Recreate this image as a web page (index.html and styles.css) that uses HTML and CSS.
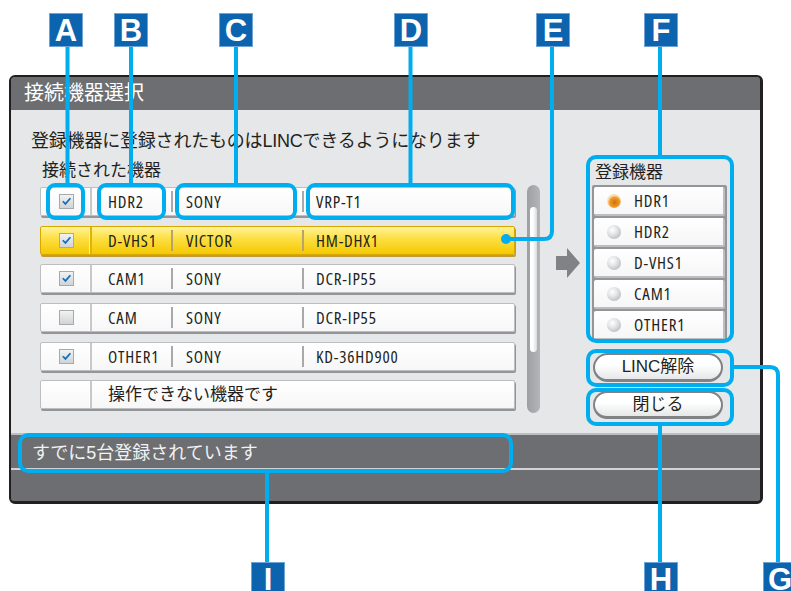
FILE: index.html
```html
<!DOCTYPE html>
<html>
<head>
    <title>接続機器選択</title>
    <link rel="stylesheet" href="styles.css">
</head>
<body>

<div class="page">
    <div class="dialog">
        <div class="titlebar">接続機器選択</div>

        <div class="content">
            <p class="intro">登録機器に登録されたものはLINCできるようになります</p>

            <div class="main">
                <div class="devices">
                    <div class="list-label">接続された機器</div>
                    <div class="rows">
                        <div class="row">
                            <div class="chk-cell"><span class="chk"><svg viewBox="0 0 15 15"><path d="M3.2 7.2 L6.3 10.3 L12 3.8"/></svg></span></div>
                            <div class="cell name">HDR2</div>
                            <div class="cell maker">SONY</div>
                            <div class="cell model">VRP-T1</div>
                        </div>
                        <div class="row selected">
                            <div class="chk-cell"><span class="chk"><svg viewBox="0 0 15 15"><path d="M3.2 7.2 L6.3 10.3 L12 3.8"/></svg></span></div>
                            <div class="cell name">D-VHS1</div>
                            <div class="cell maker">VICTOR</div>
                            <div class="cell model">HM-DHX1</div>
                        </div>
                        <div class="row">
                            <div class="chk-cell"><span class="chk"><svg viewBox="0 0 15 15"><path d="M3.2 7.2 L6.3 10.3 L12 3.8"/></svg></span></div>
                            <div class="cell name">CAM1</div>
                            <div class="cell maker">SONY</div>
                            <div class="cell model">DCR-IP55</div>
                        </div>
                        <div class="row">
                            <div class="chk-cell"><span class="chk"></span></div>
                            <div class="cell name">CAM</div>
                            <div class="cell maker">SONY</div>
                            <div class="cell model">DCR-IP55</div>
                        </div>
                        <div class="row">
                            <div class="chk-cell"><span class="chk"><svg viewBox="0 0 15 15"><path d="M3.2 7.2 L6.3 10.3 L12 3.8"/></svg></span></div>
                            <div class="cell name">OTHER1</div>
                            <div class="cell maker">SONY</div>
                            <div class="cell model">KD-36HD900</div>
                        </div>
                        <div class="row disabled">
                            <div class="chk-cell"></div>
                            <div class="cell note">操作できない機器です</div>
                        </div>
                    </div>
                </div>

                <div class="scrollbar"><div class="thumb"></div></div>

                <div class="arrow">
                    <svg viewBox="0 0 24 30"><polygon points="0,8 11,8 11,0 24,15 11,30 11,22 0,22"/></svg>
                </div>

                <div class="registered">
                    <div class="reg-title">登録機器</div>
                    <div class="reg-list">
                        <div class="reg-item"><span class="radio on"></span>HDR1</div>
                        <div class="reg-item"><span class="radio"></span>HDR2</div>
                        <div class="reg-item"><span class="radio"></span>D-VHS1</div>
                        <div class="reg-item"><span class="radio"></span>CAM1</div>
                        <div class="reg-item"><span class="radio"></span>OTHER1</div>
                    </div>
                    <div class="btn btn-linc">LINC解除</div>
                    <div class="btn btn-close">閉じる</div>
                </div>
            </div>
        </div>

        <div class="status">すでに5台登録されています</div>
        <div class="footer"></div>
    </div>

    <!-- callout lines and frames -->
    <svg class="callouts" viewBox="0 0 791 591">
        <line x1="67.5" y1="46" x2="67.5" y2="185"/>
        <line x1="131" y1="46" x2="131" y2="185"/>
        <line x1="236" y1="46" x2="236" y2="185"/>
        <line x1="410.5" y1="46" x2="410.5" y2="185"/>
        <line x1="660" y1="46" x2="660" y2="157"/>
        <path d="M552 46 V231 Q552 239 544 239 H506"/>
        <circle cx="506" cy="239" r="5" class="dot"/>
        <path d="M732 367 H770 Q778 367 778 375 V562"/>
        <line x1="660" y1="424" x2="660" y2="562"/>
        <line x1="267" y1="471" x2="267" y2="562"/>

        <rect x="48" y="185" width="35" height="33" rx="7"/>
        <rect x="99" y="185" width="65" height="33" rx="7"/>
        <rect x="177" y="185" width="118" height="33" rx="7"/>
        <rect x="308" y="185" width="205" height="33" rx="7"/>
        <rect x="588" y="157" width="144" height="184" rx="8"/>
        <rect x="588" y="351" width="144" height="34" rx="8"/>
        <rect x="588" y="390" width="144" height="34" rx="8"/>
        <rect x="20" y="435" width="491" height="36" rx="8"/>
    </svg>

    <div class="tag tag-a">A</div>
    <div class="tag tag-b">B</div>
    <div class="tag tag-c">C</div>
    <div class="tag tag-d">D</div>
    <div class="tag tag-e">E</div>
    <div class="tag tag-f">F</div>
    <div class="tag tag-i">I</div>
    <div class="tag tag-h">H</div>
    <div class="tag tag-g">G</div>
</div>

</body>
</html>
```

FILE: styles.css
```css
body {
    margin: 0;
    background-color: #ffffff;
    font-family: "Liberation Sans", "Noto Sans CJK JP", sans-serif;
    color: #231f20;
}
.page {
    position: relative;
    width: 791px;
    height: 591px;
    overflow: hidden;
}
.dialog {
    box-sizing: border-box;
    width: 754px;
    height: 429px;
    margin: 75px 0 0 9px;
    border: 2px solid #231f20;
    border-right-width: 3px;
    border-bottom-width: 3px;
    border-radius: 6px;
    overflow: hidden;
    background-color: #6d6e71;
}
.titlebar {
    height: 33px;
    line-height: 33px;
    padding-left: 13px;
    font-size: 20px;
    color: #ffffff;
    background-color: #6d6e71;
}
.content {
    height: 323px;
    background-color: #e6e7e8;
    overflow: hidden;
}
.intro {
    margin: 0;
    padding: 20px 0 0 20px;
    font-size: 18px;
    line-height: 22px;
    letter-spacing: -0.2px;
}
.main {
    display: flex;
    align-items: flex-start;
    margin: 8px 0 0 29px;
}
.devices {
    width: 475px;
}
.list-label {
    padding-left: 2px;
    font-size: 17px;
    line-height: 22px;
}
.rows {
    display: flex;
    flex-direction: column;
    gap: 9.7px;
    margin-top: 5px;
}
.row {
    box-sizing: border-box;
    height: 29px;
    display: grid;
    grid-template-columns: 51px 79px 131px 1fr;
    align-items: center;
    background: linear-gradient(#ffffff, #f7f7f7);
    border: 1px solid #bcbec0;
    border-radius: 2px;
    box-shadow: 1px 2px 0 #939598;
}
.row.selected {
    background: linear-gradient(#fff39a, #fde047 40%, #f5c800);
    border-color: #d7a900;
    box-shadow: 1px 2px 0 #c39b3c;
}
.row.disabled {
    grid-template-columns: 51px 1fr;
}
.chk-cell {
    height: 100%;
    display: flex;
    align-items: center;
    justify-content: center;
    border-right: 2px solid #c7c8ca;
    box-shadow: inset -1px 0 0 #ffffff;
}
.row.selected .chk-cell {
    border-right-color: #e2b400;
    box-shadow: inset -1px 0 0 #fff3a0;
}
.chk {
    box-sizing: border-box;
    width: 15px;
    height: 15px;
    margin-left: 2px;
    border: 1px solid #a7a9ac;
    background: linear-gradient(#f1f2f2, #d1d3d4);
}
.chk svg {
    display: block;
    width: 13px;
    height: 13px;
}
.chk path {
    fill: none;
    stroke: #0f6fc0;
    stroke-width: 2;
}
.cell {
    font-family: "Open Sans", "DejaVu Sans Condensed", sans-serif;
    font-stretch: 75%;
    font-size: 17px;
    letter-spacing: 0.8px;
    line-height: 21px;
    white-space: nowrap;
}
.name {
    padding-left: 16px;
}
.maker {
    padding-left: 13px;
    border-left: 2px solid #a7a9ac;
}
.model {
    padding-left: 12px;
    border-left: 2px solid #a7a9ac;
}
.row.selected .maker,
.row.selected .model {
    border-left-color: #b8a46a;
}
.note {
    padding-left: 16px;
    font-family: "Liberation Sans", "Noto Sans CJK JP", sans-serif;
    font-stretch: normal;
    font-size: 17px;
    letter-spacing: 0;
}
.scrollbar {
    width: 13px;
    height: 228px;
    margin: 25px 0 0 12px;
    border-radius: 7px;
    background: linear-gradient(90deg, #9d9fa2, #b3b5b8);
    padding-top: 22px;
    box-sizing: border-box;
}
.thumb {
    width: 7px;
    height: 145px;
    margin-left: 3px;
    border-radius: 4px;
    background: linear-gradient(90deg, #ffffff 40%, #d9dadb);
}
.arrow {
    width: 24px;
    height: 30px;
    margin: 88px 0 0 16px;
}
.arrow svg {
    display: block;
    width: 24px;
    height: 30px;
    fill: #808285;
}
.registered {
    width: 135px;
    margin-left: 12px;
}
.reg-title {
    margin-top: 3px;
    padding-left: 3px;
    font-size: 17px;
    line-height: 20px;
}
.reg-list {
    margin-top: 2px;
    padding: 2px;
    display: flex;
    flex-direction: column;
    gap: 2px;
    background-color: #939598;
    border-radius: 2px;
}
.reg-item {
    box-sizing: border-box;
    height: 29px;
    display: flex;
    align-items: center;
    padding-left: 13px;
    background: linear-gradient(#ffffff, #f6f6f6);
    border-right: 2px solid #bcbec0;
    border-bottom: 2px solid #bcbec0;
    border-radius: 2px;
    font-family: "Open Sans", "DejaVu Sans Condensed", sans-serif;
    font-stretch: 75%;
    font-size: 17px;
    letter-spacing: 0.8px;
}
.radio {
    width: 14px;
    height: 14px;
    margin-right: 13px;
    border-radius: 50%;
    background: radial-gradient(circle at 38% 35%, #ffffff 0, #e6e7e8 35%, #a7a9ac 100%);
}
.radio.on {
    background: radial-gradient(circle at 55% 60%, #d06f08 0, #f39c2c 45%, #fbe0b8 62%, #d1d3d4 100%);
}
.btn {
    box-sizing: border-box;
    width: 130px;
    margin-left: 1px;
    border: 2px solid #808285;
    border-bottom-width: 3px;
    border-radius: 15px;
    background: linear-gradient(#ffffff 40%, #e6e7e8);
    text-align: center;
    font-size: 17px;
}
.btn-linc {
    height: 29px;
    line-height: 24px;
    margin-top: 11px;
}
.btn-close {
    height: 28px;
    line-height: 23px;
    margin-top: 9px;
}
.status {
    height: 33px;
    line-height: 36px;
    padding-left: 21px;
    font-size: 18px;
    color: #f1f2f2;
    border-top: 2px solid #bcbec0;
    border-bottom: 2px solid #d1d3d4;
    background-color: #6d6e71;
}
.footer {
    height: 31px;
    background-color: #6d6e71;
}

/* callouts */
.callouts {
    position: absolute;
    left: 0;
    top: 0;
    width: 791px;
    height: 591px;
    pointer-events: none;
}
.callouts line,
.callouts path,
.callouts rect {
    fill: none;
    stroke: #00aeef;
    stroke-width: 4;
}
.callouts .dot {
    fill: #00aeef;
}
.tag {
    position: absolute;
    box-sizing: border-box;
    width: 34px;
    height: 34px;
    border: 1px solid #6fa3d6;
    background-color: #0c63ae;
    color: #ffffff;
    font-family: "Liberation Sans", sans-serif;
    font-weight: bold;
    font-size: 31px;
    line-height: 34px;
    text-align: center;
    top: 13px;
}
.tag-a { left: 49px; }
.tag-b { left: 114px; }
.tag-c { left: 219px; }
.tag-d { left: 394px; }
.tag-e { left: 536px; }
.tag-f { left: 644px; }
.tag-i { left: 251px; top: 562px; }
.tag-h { left: 644px; top: 562px; }
.tag-g { left: 763px; top: 562px; }
```
